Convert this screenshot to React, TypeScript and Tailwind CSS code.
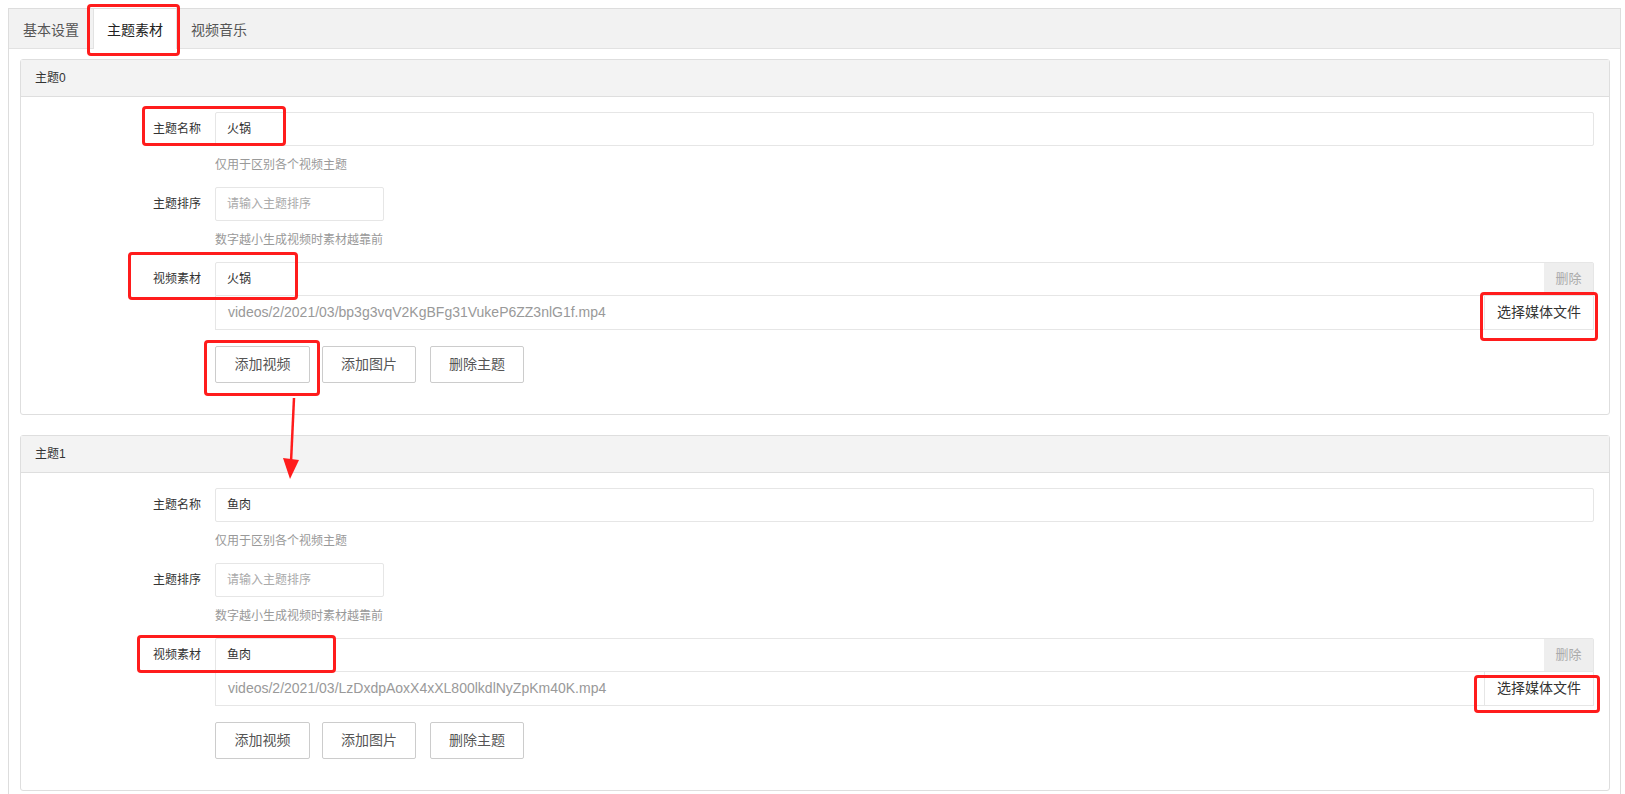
import React from 'react';

interface Theme {
  name: string;
  path: string;
}

const themes: Theme[] = [
  { name: '火锅', path: 'videos/2/2021/03/bp3g3vqV2KgBFg31VukeP6ZZ3nlG1f.mp4' },
  { name: '鱼肉', path: 'videos/2/2021/03/LzDxdpAoxX4xXL800lkdlNyZpKm40K.mp4' },
];

const tabs = ['基本设置', '主题素材', '视频音乐'];

// red annotation frames drawn over the screenshot
const marks = [
  'left-[87px] top-[4px] w-[93px] h-[52px]',
  'left-[142px] top-[106px] w-[144px] h-[40px]',
  'left-[128px] top-[252px] w-[170px] h-[48px]',
  'left-[1480px] top-[292px] w-[118px] h-[49px]',
  'left-[204px] top-[340px] w-[116px] h-[56px]',
  'left-[137px] top-[635px] w-[199px] h-[38px]',
  'left-[1474px] top-[675px] w-[126px] h-[38px]',
];

function Label({ children }: { children: React.ReactNode }) {
  return <div className="w-[180px] shrink-0 text-right text-[12px] text-[#333]">{children}</div>;
}

function ThemePanel({ index, theme }: { index: number; theme: Theme }) {
  return (
    <div className="mb-[20px] rounded-[3px] border border-[#dedede] bg-white">
      <div className="flex h-[37px] items-center border-b border-[#dedede] bg-[#f3f3f3] pl-[14px] text-[12px] text-[#333]">
        主题{index}
      </div>
      <div className="pr-[15px] pt-[15px] pb-[31px]">
        <div className="flex items-center">
          <Label>主题名称</Label>
          <div className="ml-[14px] flex h-[34px] flex-1 items-center rounded-[2px] border border-[#e6e6e6] pl-[11px] text-[12px] text-[#333]">
            {theme.name}
          </div>
        </div>
        <div className="ml-[194px] mt-[9px] text-[12px] leading-[20px] text-[#999]">仅用于区别各个视频主题</div>

        <div className="mt-[12px] flex items-center">
          <Label>主题排序</Label>
          <div className="ml-[14px] flex h-[34px] w-[169px] items-center rounded-[2px] border border-[#e6e6e6] pl-[11px] text-[12px] text-[#aaa]">
            请输入主题排序
          </div>
        </div>
        <div className="ml-[194px] mt-[9px] text-[12px] leading-[20px] text-[#999]">数字越小生成视频时素材越靠前</div>

        <div className="mt-[12px] flex items-start">
          <div className="flex h-[34px] items-center">
            <Label>视频素材</Label>
          </div>
          <div className="ml-[14px] flex-1">
            <div className="flex h-[34px] rounded-t-[2px] border border-[#e6e6e6]">
              <div className="flex flex-1 items-center pl-[11px] text-[12px] text-[#333]">{theme.name}</div>
              <div className="flex w-[49px] items-center justify-center bg-[#eeeeee] text-[13px] text-[#aaa]">删除</div>
            </div>
            <div className="flex h-[34px] border border-t-0 border-[#e6e6e6]">
              <div className="flex flex-1 items-center pl-[12px] text-[14px] text-[#999]">{theme.path}</div>
              <div className="flex w-[109px] items-center justify-center border-l border-[#e6e6e6] text-[14px] text-[#333]">
                选择媒体文件
              </div>
            </div>
            <div className="mt-[16px] flex">
              <button className="h-[37px] w-[95px] rounded-[2px] border border-[#ccc] bg-white text-[14px] text-[#555]">添加视频</button>
              <button className="ml-[12px] h-[37px] w-[94px] rounded-[2px] border border-[#ccc] bg-white text-[14px] text-[#555]">添加图片</button>
              <button className="ml-[14px] h-[37px] w-[94px] rounded-[2px] border border-[#ccc] bg-white text-[14px] text-[#555]">删除主题</button>
            </div>
          </div>
        </div>
      </div>
    </div>
  );
}

export default function App() {
  return (
    <div className="relative min-h-[794px] w-[1625px] bg-white font-['Liberation_Sans','Noto_Sans_CJK_SC',sans-serif]">
      <div className="ml-[8px] pt-[8px]">
        <div className="w-[1613px] border border-[#dddddd]">
          <div className="flex h-[40px] border-b border-[#e2e2e2] bg-[#f2f2f2]">
            {tabs.map((t, i) => (
              <div
                key={t}
                className={
                  i === 1
                    ? '-mb-px flex w-[84px] items-center justify-center border-x border-[#e2e2e2] bg-white pt-[3px] text-[14px] text-[#222]'
                    : 'flex w-[84px] items-center justify-center pt-[3px] text-[14px] text-[#555]'
                }
              >
                {t}
              </div>
            ))}
          </div>
          <div className="pl-[11px] pr-[10px] pt-[10px]">
            {themes.map((theme, i) => (
              <ThemePanel key={i} index={i} theme={theme} />
            ))}
          </div>
        </div>
      </div>

      {marks.map((m) => (
        <div key={m} className={`absolute rounded-[4px] border-[3px] border-[#ff1c1c] ${m}`} />
      ))}

      <svg className="absolute left-[270px] top-[394px]" width="40" height="90" viewBox="0 0 40 90">
        <line x1="24" y1="4" x2="21" y2="68" stroke="#ff1c1c" strokeWidth="2.5" />
        <polygon points="13,64 29,66 20,85" fill="#ff1c1c" />
      </svg>
    </div>
  );
}
